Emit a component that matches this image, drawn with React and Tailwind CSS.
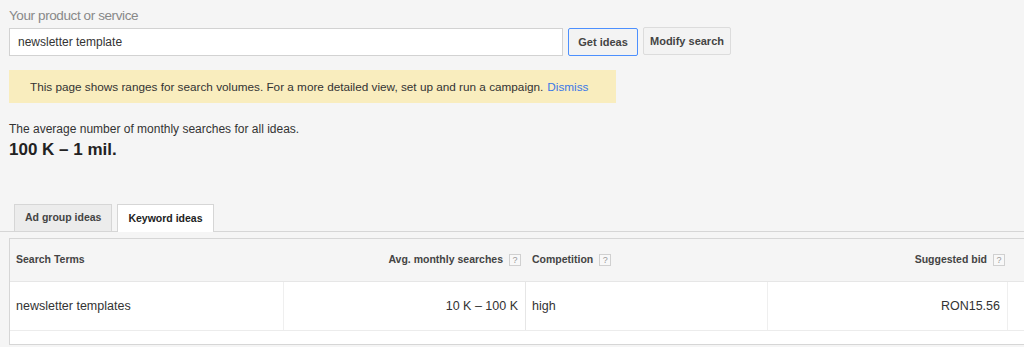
const Help = () => (
  <span className="inline-flex items-center justify-center w-[12px] h-[12px] ml-[6px] border border-[#d0d0d0] bg-[#f8f8f8] text-[9px] font-normal text-[#999] leading-none">
    ?
  </span>
);

export default function App() {
  return (
    <div className="w-[1024px] h-[347px] overflow-hidden bg-[#f5f5f5] text-[#333] font-['Liberation_Sans',Arial,sans-serif]">
      <div className="pl-[9px] pt-[7px]">
        <div className="text-[13.5px] leading-[17px] tracking-[-0.4px] text-[#888]">Your product or service</div>
        <div className="flex items-start mt-[4px]">
          <div className="w-[554px] h-[28px] bg-white border border-[#d2d2d2] flex items-center pl-[8px] text-[12px] text-[#333]">
            newsletter template
          </div>
          <button className="ml-[5px] w-[70px] h-[28px] border border-[#4d90fe] bg-[#f3f3f3] rounded-[2px] text-[11px] font-bold text-[#444]">
            Get ideas
          </button>
          <button className="ml-[5px] -mt-[1px] w-[88px] h-[28px] border border-[#dcdcdc] bg-[#f3f3f3] rounded-[2px] text-[11px] font-bold text-[#444]">
            Modify search
          </button>
        </div>
        <div className="mt-[14px] w-[607px] h-[33px] bg-[#f9edbe] flex items-center pl-[21px] text-[11.75px] text-[#333]">
          This page shows ranges for search volumes. For a more detailed view, set up and run a campaign.
          <span className="ml-[4px] text-[#3b78e7]">Dismiss</span>
        </div>
        <div className="mt-[19px] text-[12px] leading-[14px]">The average number of monthly searches for all ideas.</div>
        <div className="mt-[4px] text-[17px] leading-[20px] font-bold text-[#222]">100 K – 1 mil.</div>
      </div>

      <div className="mt-[44px] flex items-end pl-[14px] border-b border-[#d6d6d6] h-[28px]">
        <div className="h-[27px] px-[10px] flex items-center border border-b-0 border-[#d6d6d6] bg-[#ececec] text-[10.5px] font-bold text-[#444]">
          Ad group ideas
        </div>
        <div className="ml-[5px] h-[28px] -mb-px px-[10px] flex items-center border border-b-0 border-[#d6d6d6] bg-white text-[10.5px] font-bold text-[#222]">
          Keyword ideas
        </div>
      </div>

      <div className="ml-[9px] mt-[6px] w-[1030px] border border-[#d6d6d6] bg-white">
        <div className="flex h-[43px] bg-[#f5f5f5] border-b border-[#e6e6e6] text-[10.5px] font-bold text-[#444]">
          <div className="w-[274px] flex items-center pl-[6px]">Search Terms</div>
          <div className="w-[242px] flex items-center justify-end pr-[5px]">
            Avg. monthly searches <Help />
          </div>
          <div className="w-[242px] flex items-center pl-[6px]">
            Competition <Help />
          </div>
          <div className="w-[240px] flex items-center justify-end pr-[3px]">
            Suggested bid <Help />
          </div>
          <div className="flex-1" />
        </div>
        <div className="flex h-[49px] border-b border-[#ececec] text-[12.5px] text-[#333]">
          <div className="w-[274px] flex items-center pl-[6px] border-r border-[#efefef]">newsletter templates</div>
          <div className="w-[242px] flex items-center justify-end pr-[7px] border-r border-[#e6e6e6]">10 K – 100 K</div>
          <div className="w-[242px] flex items-center pl-[6px] border-r border-[#efefef]">high</div>
          <div className="w-[240px] flex items-center justify-end pr-[7px] border-r border-[#efefef]">RON15.56</div>
          <div className="flex-1" />
        </div>
        <div className="h-[13px]" />
      </div>
    </div>
  );
}
